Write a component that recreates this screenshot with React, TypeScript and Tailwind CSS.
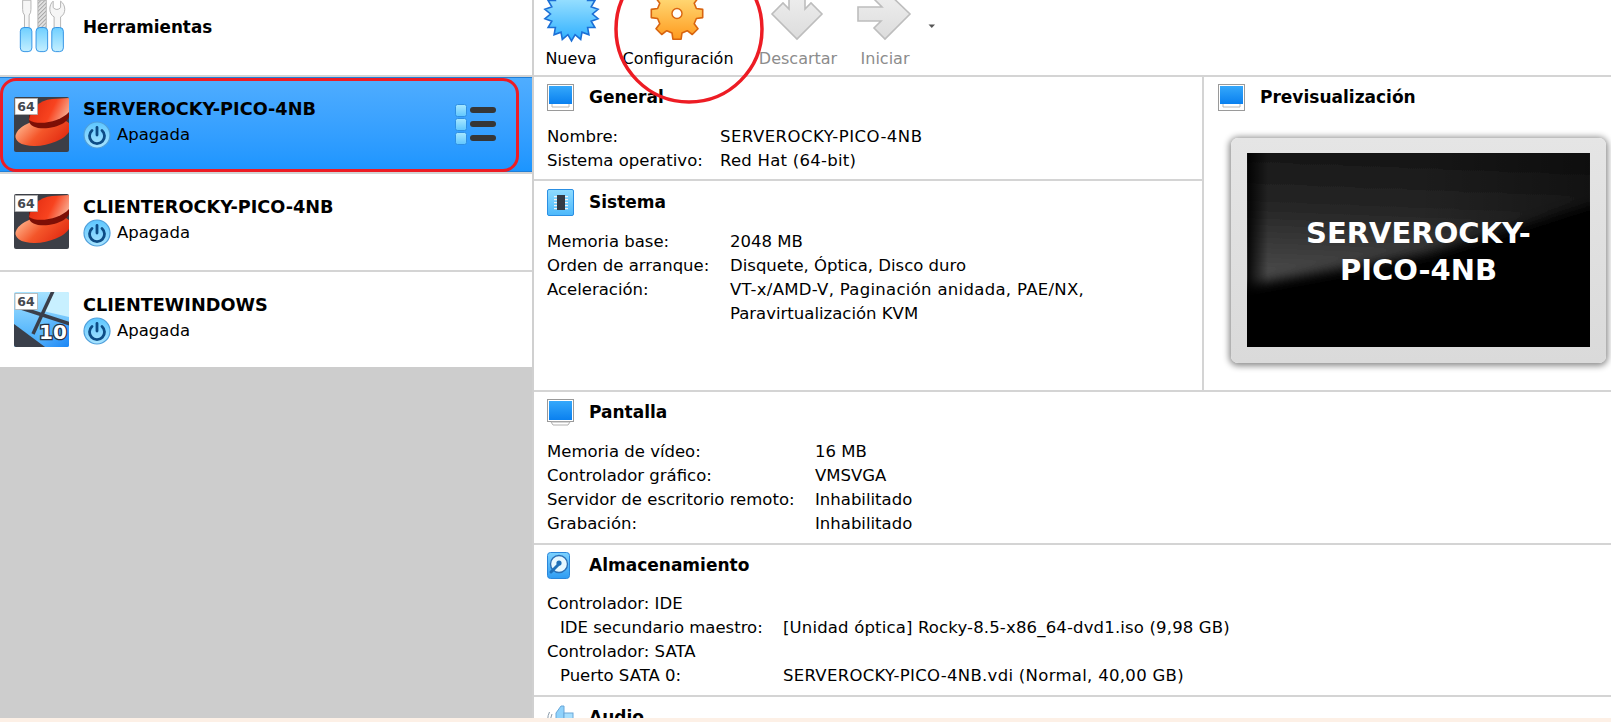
import React from "react";

function starPoints(cx: number, cy: number, ro: number, ri: number, n: number) {
  const p: string[] = [];
  for (let i = 0; i < n * 2; i++) {
    const r = i % 2 ? ri : ro;
    const a = (Math.PI * i) / n - Math.PI / 2;
    p.push(`${(cx + r * Math.cos(a)).toFixed(1)},${(cy + r * Math.sin(a)).toFixed(1)}`);
  }
  return p.join(" ");
}

function gearPoints(cx: number, cy: number, ro: number, ri: number, n: number) {
  const p: string[] = [];
  const step = (Math.PI * 2) / n;
  for (let i = 0; i < n; i++) {
    const a = step * i + Math.PI / 2;
    const offs: [number, number][] = [
      [-0.32, ri],
      [-0.2, ro],
      [0.2, ro],
      [0.32, ri],
    ];
    offs.forEach(([o, r]) => {
      const t = a + o * step;
      p.push(`${(cx + r * Math.cos(t)).toFixed(1)},${(cy + r * Math.sin(t)).toFixed(1)}`);
    });
  }
  return p.join(" ");
}

const Tools = () => (
  <svg width="50" height="56" viewBox="16 0 54 56" className="shrink-0">
    <defs>
      <linearGradient id="th" x1="0" y1="0" x2="0" y2="1">
        <stop offset="0" stopColor="#6fcfff" />
        <stop offset="1" stopColor="#c4efff" />
      </linearGradient>
      <pattern id="hatch" width="3" height="3" patternUnits="userSpaceOnUse" patternTransform="rotate(45)">
        <rect width="3" height="3" fill="#e8e8e8" />
        <rect width="1.2" height="3" fill="#a8a8a8" />
      </pattern>
    </defs>
    <path d="M21 -2 L21 8 Q21 12 23 14 L23 28 L28 28 L28 14 Q30 12 30 8 L30 -2 Z" fill="#f6f6f6" stroke="#b0b0b0" strokeWidth="1" />
    <rect x="37.5" y="-2" width="9" height="30" fill="url(#hatch)" stroke="#b0b0b0" />
    <path d="M55 28 L55 16 C49 13 49 3 54 -1 L54 6 Q58 10 62 6 L62 -1 C68 3 68 13 62 16 L62 28 Z" fill="#f6f6f6" stroke="#b0b0b0" strokeWidth="1" />
    <rect x="18.5" y="27.5" width="12.5" height="26" rx="4" fill="url(#th)" stroke="#2b8fe3" />
    <rect x="35.5" y="27.5" width="12.5" height="26" rx="4" fill="url(#th)" stroke="#2b8fe3" />
    <rect x="52.5" y="27.5" width="12.5" height="26" rx="4" fill="url(#th)" stroke="#2b8fe3" />
  </svg>
);

const Badge64 = () => (
  <g>
    <rect x="1" y="1.5" width="22.5" height="16" fill="#fff" stroke="#b0b0b0" strokeWidth="0.8" />
    <text x="12" y="14" fontSize="12.5" fontWeight="700" textAnchor="middle" fill="#45484f">64</text>
  </g>
);

const RedHat = ({ id }: { id: string }) => (
  <svg width="55" height="55" viewBox="0 0 55 55" className="shrink-0">
    <defs>
      <linearGradient id={`b${id}`} x1="0" y1="0.2" x2="1" y2="0.9">
        <stop offset="0" stopColor="#ffb088" />
        <stop offset="0.45" stopColor="#f4562a" />
        <stop offset="1" stopColor="#e0260e" />
      </linearGradient>
      <linearGradient id={`c${id}`} x1="0" y1="0.2" x2="1" y2="0.5">
        <stop offset="0" stopColor="#e02a10" />
        <stop offset="0.6" stopColor="#f8431f" />
        <stop offset="1" stopColor="#f8a58a" />
      </linearGradient>
      <clipPath id={`k${id}`}>
        <rect width="55" height="55" rx="2" />
      </clipPath>
    </defs>
    <g clipPath={`url(#k${id})`}>
      <rect width="55" height="55" fill="#3c3f47" />
      <ellipse cx="29" cy="35" rx="28" ry="13" transform="rotate(-12 29 35)" fill={`url(#b${id})`} />
      <path d="M15 24 C16 31 28 33 40 30 C47 28 53 25 55 20 L55 12 L15 18 Z" fill="#7d0f06" />
      <path d="M15 23 C17 12 25 3 38 2 L55 1 L55 15 C46 25 24 29 15 23 Z" fill={`url(#c${id})`} />
      <Badge64 />
    </g>
  </svg>
);

const Win10 = () => (
  <svg width="55" height="55" viewBox="0 0 55 55" className="shrink-0">
    <defs>
      <linearGradient id="w1" x1="0" y1="0" x2="0" y2="1">
        <stop offset="0" stopColor="#a5e2ff" />
        <stop offset="1" stopColor="#3da8fb" />
      </linearGradient>
      <linearGradient id="w2" x1="0" y1="0" x2="1" y2="1">
        <stop offset="0" stopColor="#7fd0ff" />
        <stop offset="1" stopColor="#1b86f5" />
      </linearGradient>
      <clipPath id="wk">
        <rect width="55" height="55" rx="2" />
      </clipPath>
    </defs>
    <g clipPath="url(#wk)">
      <rect width="55" height="55" fill="url(#w1)" />
      <polygon points="30,25 55,31 55,55 20,55" fill="url(#w2)" />
      <polygon points="36,0 55,0 55,25 29,19" fill="#c8f0ff" />
      <polygon points="0,32 31,55 0,55" fill="#3a3f4a" />
      <path d="M39 -1 L19 42" stroke="#3a3f4a" strokeWidth="3.5" />
      <path d="M4 15 L56 32" stroke="#3a3f4a" strokeWidth="3.5" />
      <Badge64 />
      <text x="39" y="47" fontSize="20" fontWeight="700" textAnchor="middle" fill="#fff" stroke="#263040" strokeWidth="2.6" paintOrder="stroke">10</text>
    </g>
  </svg>
);

const Power = ({ id }: { id: string }) => (
  <svg width="28" height="28" viewBox="0 0 28 28" className="shrink-0">
    <defs>
      <linearGradient id={`p${id}`} x1="0" y1="0" x2="0" y2="1">
        <stop offset="0" stopColor="#5cc6ff" />
        <stop offset="1" stopColor="#a9e4ff" />
      </linearGradient>
    </defs>
    <circle cx="14" cy="14" r="13" fill={`url(#p${id})`} stroke="#4f9fdb" strokeWidth="1.2" />
    <path d="M9 9.5 A7.5 7.5 0 1 0 19 9.5" fill="none" stroke="#0d4c86" strokeWidth="2.8" strokeLinecap="round" />
    <path d="M14 6.5 L14 14" stroke="#0d4c86" strokeWidth="2.8" strokeLinecap="round" />
  </svg>
);

const DetailsIcon = () => (
  <svg width="42" height="41" viewBox="0 0 42 41" className="shrink-0">
    <defs>
      <linearGradient id="dl" x1="0" y1="0" x2="0" y2="1">
        <stop offset="0" stopColor="#a8e8ff" />
        <stop offset="1" stopColor="#5fc6ff" />
      </linearGradient>
    </defs>
    {[0, 14, 28].map((y) => (
      <g key={y}>
        <rect x="0.5" y={y + 0.5} width="11" height="12" rx="2" fill="url(#dl)" stroke="#2f8fe3" />
        <rect x="15" y={y + 3} width="26" height="6" rx="3" fill="#363636" />
      </g>
    ))}
  </svg>
);

const Monitor = ({ id, stand }: { id: string; stand?: boolean }) => (
  <svg width="28" height="28" viewBox="0 0 28 28" className="shrink-0">
    <defs>
      <linearGradient id={`m${id}`} x1="0" y1="0" x2="0" y2="1">
        <stop offset="0" stopColor="#35a8fb" />
        <stop offset="1" stopColor="#0a80ef" />
      </linearGradient>
    </defs>
    {stand ? (
      <>
        <rect x="0.5" y="0.5" width="26" height="22" fill="#fff" stroke="#9a9a9a" />
        <rect x="2" y="2" width="23" height="19" fill={`url(#m${id})`} />
        <path d="M4 23 L23 23 L21 26 L6 26 Z" fill="#fff" stroke="#b0b0b0" />
      </>
    ) : (
      <>
        <rect x="0.5" y="0.5" width="26" height="26" fill="#fff" stroke="#9a9a9a" />
        <rect x="2" y="2" width="23" height="18" fill={`url(#m${id})`} />
        <path d="M5 20 L5 23 L22 23 L22 20" fill="none" stroke="#b8b8b8" />
      </>
    )}
  </svg>
);

const Chip = () => (
  <svg width="28" height="28" viewBox="0 0 28 28" className="shrink-0">
    <defs>
      <linearGradient id="cg" x1="0" y1="0" x2="0" y2="1">
        <stop offset="0" stopColor="#8fdcff" />
        <stop offset="1" stopColor="#4db8fb" />
      </linearGradient>
    </defs>
    <rect x="0.5" y="0.5" width="26" height="26" rx="1.5" fill="url(#cg)" stroke="#2b8fe3" />
    <rect x="10" y="6" width="8" height="15" fill="#333a44" />
    {[7, 10, 13, 16, 19].map((y) => (
      <g key={y}>
        <rect x="7" y={y} width="3" height="1.2" fill="#f2f2f2" />
        <rect x="18" y={y} width="3" height="1.2" fill="#f2f2f2" />
      </g>
    ))}
  </svg>
);

const Disk = () => (
  <svg width="28" height="28" viewBox="0 0 28 28" className="shrink-0">
    <defs>
      <linearGradient id="hd" x1="0" y1="0" x2="0" y2="1">
        <stop offset="0" stopColor="#7cd2ff" />
        <stop offset="1" stopColor="#2f9cf3" />
      </linearGradient>
    </defs>
    <rect x="0.5" y="0.5" width="22" height="26" rx="3" fill="url(#hd)" stroke="#2b86da" />
    <circle cx="12" cy="12" r="8.5" fill="#e6f7ff" stroke="#2b6fb5" strokeWidth="1.4" />
    <circle cx="12" cy="11" r="2.6" fill="#1f6fb8" />
    <path d="M12 12 L4 20" stroke="#1f6fb8" strokeWidth="3" strokeLinecap="round" />
  </svg>
);

const Speaker = () => (
  <svg width="28" height="28" viewBox="0 0 28 28" className="shrink-0 mt-[1px]">
    <path d="M9 8 L14 1 L17 1 L17 27 L9 20 Z" fill="#8fd2fb" stroke="#6aa7d8" />
    <rect x="17" y="8" width="9" height="14" fill="#a8dffd" stroke="#6aa7d8" />
    <path d="M5 9 Q2 14 5 19 M2.5 7 Q-1 14 2.5 21" fill="none" stroke="#8a9aa8" />
  </svg>
);

const Heading = ({ icon, children }: { icon: React.ReactNode; children: React.ReactNode }) => (
  <div className="flex items-start h-[27px]">
    <div className="w-[42px] shrink-0">{icon}</div>
    <div className="font-bold text-[17px] leading-[27px]">{children}</div>
  </div>
);

type Row = [string, string, boolean?, string?];

const Rows = ({ rows, w, mt = "mt-[14px]" }: { rows: Row[]; w: string; mt?: string }) => (
  <div className={mt}>
    {rows.map(([a, b, sub, vc], i) => (
      <div key={i} className="flex h-[24px] leading-[24px] whitespace-pre">
        <div className={w}>
          {sub ? <span className="pl-[13px]">{a}</span> : a}
        </div>
        <div className={vc}>{b}</div>
      </div>
    ))}
  </div>
);

const Vm = ({ icon, name, id, pt, tm }: { icon: React.ReactNode; name: string; id: string; pt: string; tm: string }) => (
  <div className={`flex items-start pl-[14px] ${pt}`}>
    {icon}
    <div className={`ml-[14px] ${tm}`}>
      <div className="font-bold text-[17.7px] leading-[24px]">{name}</div>
      <div className="flex items-center">
        <Power id={id} />
        <span className="ml-[6px]">Apagada</span>
      </div>
    </div>
  </div>
);

export default function App() {
  return (
    <div className="relative w-[1611px] h-[722px] overflow-hidden bg-white text-black text-[16.5px] [font-family:'DejaVu_Sans',sans-serif]">
      <div className="flex h-[718px] overflow-hidden">
        {/* Left */}
        <div className="w-[532px] shrink-0 flex flex-col bg-[#cdcdcd]">
          <div className="h-[75px] bg-white flex items-start pl-[18px] border-b-0">
            <Tools />
            <div className="ml-[15px] mt-[15px] font-bold text-[16.8px] leading-[24px]">Herramientas</div>
          </div>
          <div className="h-[2px] bg-[#d4d4d4]" />
          <div className="relative h-[95px] bg-gradient-to-b from-[#4fadff] to-[#1b95ff] border-y border-[#1f7fd8]">
            <div className="flex items-start justify-between">
              <Vm icon={<RedHat id="a" />} name="SERVEROCKY-PICO-4NB" id="a" pt="pt-[19px]" tm="mt-0" />
              <div className="mt-[26px] mr-[35px]">
                <DetailsIcon />
              </div>
            </div>
            <div className="absolute left-0 top-0 w-[519px] h-[94px] border-[3.5px] border-[#ed1c24] rounded-[16px]" />
          </div>
          <div className="h-[2px] bg-[#d4d4d4]" />
          <div className="h-[96px] bg-white">
            <Vm icon={<RedHat id="b" />} name="CLIENTEROCKY-PICO-4NB" id="b" pt="pt-[20px]" tm="mt-[1px]" />
          </div>
          <div className="h-[2px] bg-[#d4d4d4]" />
          <div className="h-[95px] bg-white">
            <Vm icon={<Win10 />} name="CLIENTEWINDOWS" id="c" pt="pt-[20px]" tm="mt-[1px]" />
          </div>
        </div>
        <div className="w-[2px] bg-[#d0d0d0] shrink-0" />

        {/* Right */}
        <div className="flex-1 min-w-0 flex flex-col">
          {/* Toolbar */}
          <div className="h-[75px] shrink-0 flex items-start text-[16px]">
            <div className="w-[74px] flex flex-col items-center">
              <svg width="74" height="47" viewBox="534 0 74 47">
                <defs>
                  <linearGradient id="st" x1="0" y1="0" x2="0" y2="1">
                    <stop offset="0" stopColor="#b4ecff" />
                    <stop offset="1" stopColor="#2fb0ff" />
                  </linearGradient>
                </defs>
                <polygon points={starPoints(571.5, 14, 27, 21, 18)} fill="url(#st)" stroke="#1b6fd6" strokeWidth="1.6" />
              </svg>
              <div className="leading-[24px]">Nueva</div>
            </div>
            <div className="w-[140px] flex flex-col items-center">
              <svg width="140" height="47" viewBox="608 0 140 47">
                <defs>
                  <linearGradient id="gr" x1="0" y1="0" x2="0" y2="1">
                    <stop offset="0" stopColor="#ffe88a" />
                    <stop offset="1" stopColor="#ff9a1e" />
                  </linearGradient>
                </defs>
                <polygon points={gearPoints(677, 13.5, 26, 20, 8)} fill="url(#gr)" stroke="#d8640f" strokeWidth="1.6" strokeLinejoin="round" />
                <circle cx="677" cy="13.5" r="5" fill="#fff" stroke="#d8640f" strokeWidth="1.4" />
              </svg>
              <div className="leading-[24px]">Configuración</div>
            </div>
            <div className="w-[100px] flex flex-col items-center">
              <svg width="100" height="47" viewBox="748 0 100 47">
                <defs>
                  <linearGradient id="ar" x1="0" y1="0" x2="0" y2="1">
                    <stop offset="0" stopColor="#f0f0f0" />
                    <stop offset="1" stopColor="#dcdcdc" />
                  </linearGradient>
                </defs>
                <polygon points="789,-10 805,-10 805,9 811,3 822,14 797,39 772,14 783,3 789,9" fill="url(#ar)" stroke="#bdbdbd" strokeWidth="1.6" />
              </svg>
              <div className="leading-[24px] text-[#8c8c8c]">Descartar</div>
            </div>
            <div className="w-[74px] flex flex-col items-center">
              <svg width="74" height="47" viewBox="848 0 74 47">
                <polygon points="858,7 882,7 875,0 885,-10 910,14 885,39 874,28 881,21 858,21" fill="url(#ar)" stroke="#bdbdbd" strokeWidth="1.6" />
              </svg>
              <div className="leading-[24px] text-[#8c8c8c]">Iniciar</div>
            </div>
            <svg width="8" height="5" viewBox="0 0 8 5" className="ml-[6px] mt-[24px]">
              <path d="M0.5 0.5 L7 0.5 L3.8 4 Z" fill="#555" />
            </svg>
          </div>
          <div className="h-[2px] bg-[#d4d4d4] shrink-0" />

          {/* General + Sistema + Preview */}
          <div className="flex h-[313px] shrink-0">
            <div className="w-[668px] shrink-0 flex flex-col">
              <div className="h-[102px] px-[13px] pt-[7px]">
                <Heading icon={<Monitor id="g" />}>General</Heading>
                <Rows
                  w="w-[173px]"
                  rows={[
                    ["Nombre:", "SERVEROCKY-PICO-4NB", false, "tracking-[0.48px]"],
                    ["Sistema operativo:", "Red Hat (64-bit)", false, "tracking-[0.25px]"],
                  ]}
                />
              </div>
              <div className="h-[2px] bg-[#d4d4d4]" />
              <div className="px-[13px] pt-[8px]">
                <Heading icon={<Chip />}>Sistema</Heading>
                <Rows
                  w="w-[183px]"
                  rows={[
                    ["Memoria base:", "2048 MB"],
                    ["Orden de arranque:", "Disquete, Óptica, Disco duro"],
                    ["Aceleración:", "VT-x/AMD-V, Paginación anidada, PAE/NX,", false, "tracking-[0.3px]"],
                    ["", "Paravirtualización KVM"],
                  ]}
                />
              </div>
            </div>
            <div className="w-[2px] bg-[#d4d4d4] shrink-0" />
            <div className="flex-1 pl-[14px] pt-[7px]">
              <Heading icon={<Monitor id="p" />}>Previsualización</Heading>
              <div className="ml-[13px] mt-[27px] w-[375px] h-[225px] rounded-[7px] bg-gradient-to-b from-[#e5e5e5] to-[#dadada] px-[16px] pt-[15px] shadow-[0_1px_6px_2px_rgba(0,0,0,0.45)]">
                <div className="relative w-[343px] h-[194px] bg-black overflow-hidden">
                  <svg width="343" height="194" viewBox="0 0 342 194" className="absolute inset-0">
                    <defs>
                      <linearGradient id="gl" x1="0.1" y1="0" x2="0" y2="1">
                        <stop offset="0" stopColor="#141414" />
                        <stop offset="0.45" stopColor="#262626" />
                        <stop offset="1" stopColor="#505050" />
                      </linearGradient>
                      <linearGradient id="gl2" x1="0" y1="0" x2="1" y2="0">
                        <stop offset="0" stopColor="#000" stopOpacity="0.9" />
                        <stop offset="0.06" stopColor="#000" stopOpacity="0" />
                        <stop offset="0.5" stopColor="#000" stopOpacity="0" />
                        <stop offset="1" stopColor="#000" stopOpacity="0.35" />
                      </linearGradient>
                      <filter id="bl">
                        <feGaussianBlur stdDeviation="6" />
                      </filter>
                    </defs>
                    <polygon points="-10,-10 352,-10 352,48 180,100 0,132 -10,132" fill="url(#gl)" filter="url(#bl)" />
                    <rect width="342" height="150" fill="url(#gl2)" />
                  </svg>
                  <div className="relative h-full flex items-center justify-center text-center text-white font-bold text-[29px] leading-[37px] pt-[3px]">
                    SERVEROCKY-
                    <br />
                    PICO-4NB
                  </div>
                </div>
              </div>
            </div>
          </div>
          <div className="h-[2px] bg-[#d4d4d4] shrink-0" />

          {/* Pantalla */}
          <div className="h-[151px] shrink-0 px-[13px] pt-[7px]">
            <Heading icon={<Monitor id="s" stand />}>Pantalla</Heading>
            <Rows
              w="w-[268px]"
              rows={[
                ["Memoria de vídeo:", "16 MB"],
                ["Controlador gráfico:", "VMSVGA"],
                ["Servidor de escritorio remoto:", "Inhabilitado"],
                ["Grabación:", "Inhabilitado"],
              ]}
            />
          </div>
          <div className="h-[2px] bg-[#d4d4d4] shrink-0" />

          {/* Almacenamiento */}
          <div className="h-[150px] shrink-0 px-[13px] pt-[7px]">
            <Heading icon={<Disk />}>Almacenamiento</Heading>
            <Rows
              w="w-[236px]"
              mt="mt-[13px]"
              rows={[
                ["Controlador: IDE", ""],
                ["IDE secundario maestro:", "[Unidad óptica] Rocky-8.5-x86_64-dvd1.iso (9,98 GB)", true, "tracking-[0.16px]"],
                ["Controlador: SATA", ""],
                ["Puerto SATA 0:", "SERVEROCKY-PICO-4NB.vdi (Normal, 40,00 GB)", true, "tracking-[0.3px]"],
              ]}
            />
          </div>
          <div className="h-[2px] bg-[#d4d4d4] shrink-0" />

          {/* Audio */}
          <div className="px-[13px] pt-[7px]">
            <Heading icon={<Speaker />}>Audio</Heading>
          </div>
        </div>
      </div>
      <div className="h-[4px] bg-[#fdf0e6]" />

      {/* Hand-drawn annotation circle */}
      <svg width="160" height="110" viewBox="0 0 160 110" className="absolute left-[610px] top-0 pointer-events-none">
        <ellipse cx="79" cy="29" rx="73" ry="73" fill="none" stroke="#ed1c24" strokeWidth="3.5" />
      </svg>
    </div>
  );
}
